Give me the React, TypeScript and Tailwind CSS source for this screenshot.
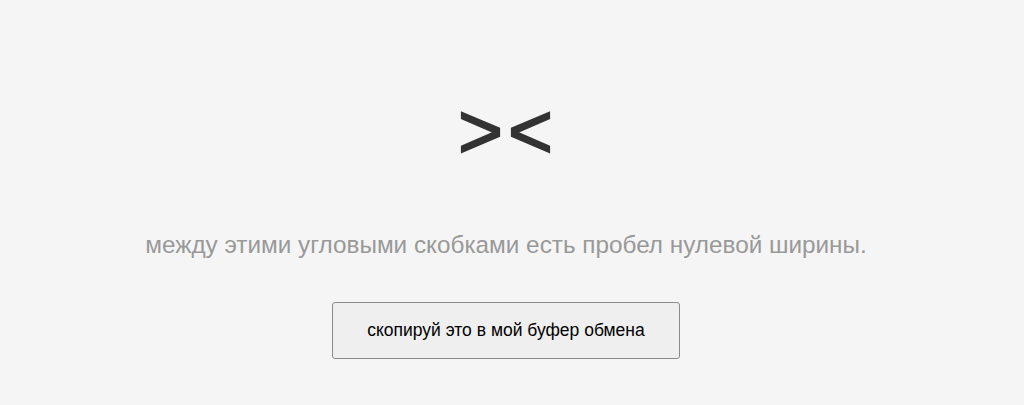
export default function App() {
  return (
    <div className="w-[1024px] h-[405px] bg-[#f5f5f5] flex flex-col items-center pr-[12px]" style={{ fontFamily: '"Liberation Sans", Arial, sans-serif' }}>
      <div className="mt-[78px] ml-[4px] h-[106px] text-[77px] leading-[106px] text-[#333333] tracking-[5px] [-webkit-text-stroke:1.8px_#333333]">&gt;{"\u200b"}&lt;</div>
      <p className="mt-[46px] text-[24.3px] leading-[30px] text-[#999999]">между этими угловыми скобками есть пробел нулевой ширины.</p>
      <button className="mt-[42px] w-[348px] h-[57px] bg-[#efefef] border border-[#8a8a8a] rounded-[3px] text-[17.5px] text-black">скопируй это в мой буфер обмена</button>
    </div>
  );
}
